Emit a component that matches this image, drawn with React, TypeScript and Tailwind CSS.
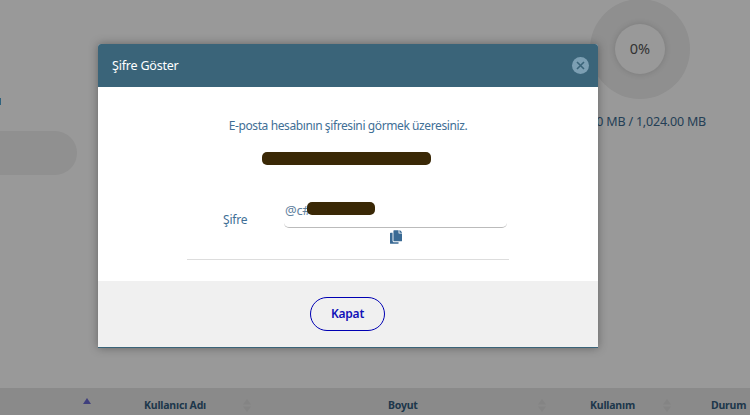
import React from 'react'
import { FaCopy } from 'react-icons/fa'

function SortIcon() {
  return (
    <svg width="8" height="13" viewBox="0 0 8 13" className="fill-[#dcdcdc]">
      <path d="M4 0 L8 5.5 H0 Z" />
      <path d="M4 13 L0 7.5 H8 Z" />
    </svg>
  )
}

function Page() {
  return (
    <div className="flex h-[415px] w-[750px] flex-col bg-white">
      <div className="flex h-[388px] justify-between">
        <div className="flex w-[77px] flex-col">
          <div className="mt-[98px] h-[7px] w-[1px] bg-[#4fa3d1]" />
          <div className="mt-[26px] h-[44px] rounded-r-[22px] bg-[#f0f0f0]" />
        </div>
        <div className="mr-[44px] flex w-[132px] flex-col items-end">
          <div className="-mt-[1px] mr-[16px] flex h-[100px] w-[100px] items-center justify-center rounded-full bg-[#eeeeee]">
            <div className="flex h-[50px] w-[50px] items-center justify-center rounded-full bg-white text-[14.5px] text-[#555] shadow-[0_0_6px_rgba(0,0,0,0.15)]">
              0%
            </div>
          </div>
          <div className="mt-[14px] whitespace-nowrap text-[12.5px] tracking-[-0.2px] text-[#3b6a8f]">0.00 MB / 1,024.00 MB</div>
        </div>
      </div>
      <div className="flex h-[27px] items-center bg-[#e6e6e6] pt-[8px] text-[10.5px] font-bold tracking-[-0.2px] text-[#335c7d]">
        <div className="ml-[83px] h-0 w-0 -translate-y-[5px] border-x-[4px] border-b-[6px] border-x-transparent border-b-[#6a6ad0]" />
        <div className="ml-[53px] w-[99px]">Kullanıcı Adı</div>
        <SortIcon />
        <div className="ml-[137px] w-[150px]">Boyut</div>
        <SortIcon />
        <div className="ml-[44px] w-[73px]">Kullanım</div>
        <SortIcon />
        <div className="ml-[40px]">Durum</div>
      </div>
    </div>
  )
}

export default function App() {
  return (
    <div className="relative h-[415px] w-[750px] overflow-hidden font-['Noto_Sans',sans-serif]">
      <Page />
      <div className="absolute inset-0 bg-black/40 pl-[98px] pt-[44px]">
        <div className="w-[500px] overflow-hidden rounded-t-[3px] border-b border-[#3a6479] bg-white shadow-[0_0_10px_rgba(0,0,0,0.35)]">
          <div className="flex h-[43px] items-center justify-between bg-[#3a6479] pl-[14px] pr-[9px]">
            <h2 className="mt-[1px] text-[12.5px] tracking-[-0.2px] text-white">Şifre Göster</h2>
            <button className="flex h-[17px] w-[17px] items-center justify-center rounded-full bg-[#7c9fb3]">
              <svg width="9" height="9" viewBox="0 0 9 9" className="stroke-[#3a6479]" strokeWidth="1.6">
                <path d="M1 1 L8 8 M8 1 L1 8" />
              </svg>
            </button>
          </div>

          <div className="flex h-[194px] flex-col items-center pt-[30px]">
            <p className="text-[12px] leading-[17px] tracking-[-0.4px] text-[#3f6f96]">E-posta hesabının şifresini görmek üzeresiniz.</p>
            <div className="mt-[18px] ml-[164px] h-[13px] w-[169px] self-start rounded-[5px] bg-[#3a2806]" />

            <div className="mt-[37px] flex w-[322px] border-b border-[#dddddd] pb-[15px] pl-[36px]">
              <label className="mt-[9px] w-[61px] text-[12px] leading-[17px] tracking-[-0.2px] text-[#3f6f96]">Şifre</label>
              <div className="flex w-[223px] flex-col items-center">
                <div className="relative h-[26px] w-full rounded-b-[5px] border-b border-[#bbbbbb] pl-[1px] text-[13px] leading-[17px] tracking-[-0.3px] text-[#5f819e]">
                  @c#
                  <div className="absolute left-[23px] top-[0px] h-[13px] w-[68px] rounded-[5px] bg-[#3a2806]" />
                </div>
                <FaCopy className="mt-[2px] h-[14px] w-[12px] text-[#3a6a94]" />
              </div>
            </div>
          </div>

          <div className="flex h-[66px] items-center justify-center bg-[#f0f0f0] pr-[1px]">
            <button className="h-[34px] w-[75px] rounded-full border border-[#0000b3] text-[12px] font-semibold tracking-[-0.2px] text-[#1010b8]">
              Kapat
            </button>
          </div>
        </div>
      </div>
    </div>
  )
}
